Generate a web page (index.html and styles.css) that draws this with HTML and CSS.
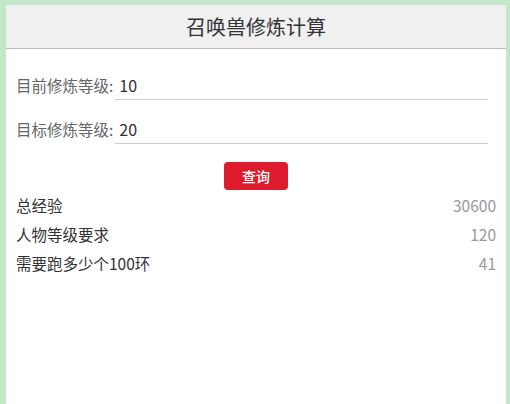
FILE: index.html
```html
<!doctype html>
<html lang="zh-CN">
<head>
	<meta charset="UTF-8">
	<title>召唤兽修炼计算</title>
	<link rel="stylesheet" href="styles.css">
</head>
<body>
	<div class="panel">
		<div class="title">召唤兽修炼计算</div>
		<div class="form">
			<div class="row">
				<label for="cur">目前修炼等级:</label>
				<input type="text" id="cur" value="10">
			</div>
			<div class="row">
				<label for="goal">目标修炼等级:</label>
				<input type="text" id="goal" value="20">
			</div>
		</div>
		<div class="btn_box">
			<button class="btn" id="btn">查询</button>
		</div>
		<ul class="result">
			<li><span>总经验</span><em id="exp">30600</em></li>
			<li><span>人物等级要求</span><em id="lv">120</em></li>
			<li><span>需要跑多少个100环</span><em id="ring">41</em></li>
		</ul>
	</div>
</body>
</html>
```

FILE: styles.css
```css
*{
	margin: 0;
	padding: 0;
	list-style-type: none;
	box-sizing: border-box;
}
body{
	background: #c2e8c9;
	padding: 5px 4px 0 6px;
	height: 404px;
	overflow: hidden;
	font-family: "Noto Sans CJK SC", "Noto Sans", sans-serif;
}
.panel{
	width: 500px;
	height: 399px;
	background: #fff;
}
.title{
	height: 44px;
	line-height: 43px;
	background: #f0f0f0;
	border-bottom: 1px solid #bdbdbd;
	text-align: center;
	font-size: 20px;
	color: #333;
}
.form{
	padding: 21px 18px 0 10px;
}
.row{
	display: flex;
	align-items: flex-end;
	height: 30px;
	margin-bottom: 14px;
}
.row label{
	font-size: 15.5px;
	line-height: 30px;
	color: #666;
	white-space: nowrap;
	margin-right: 2px;
}
.row input{
	flex: 1;
	height: 30px;
	border: none;
	border-bottom: 1px solid #ccc;
	outline: none;
	padding: 0 4px;
	font-family: inherit;
	font-size: 16px;
	color: #333;
	background: transparent;
}
.btn_box{
	display: flex;
	justify-content: center;
	padding-top: 4px;
}
.btn{
	width: 64px;
	height: 28px;
	border: none;
	border-radius: 4px;
	background: #dc1c2c;
	color: #fff;
	font-family: inherit;
	font-size: 14px;
	font-weight: 500;
}
.result{
	padding: 1px 10px 0 10px;
}
.result li{
	display: flex;
	justify-content: space-between;
	line-height: 29px;
	font-size: 15.5px;
}
.result span{
	color: #333;
}
.result em{
	font-style: normal;
	color: #999;
}
```
